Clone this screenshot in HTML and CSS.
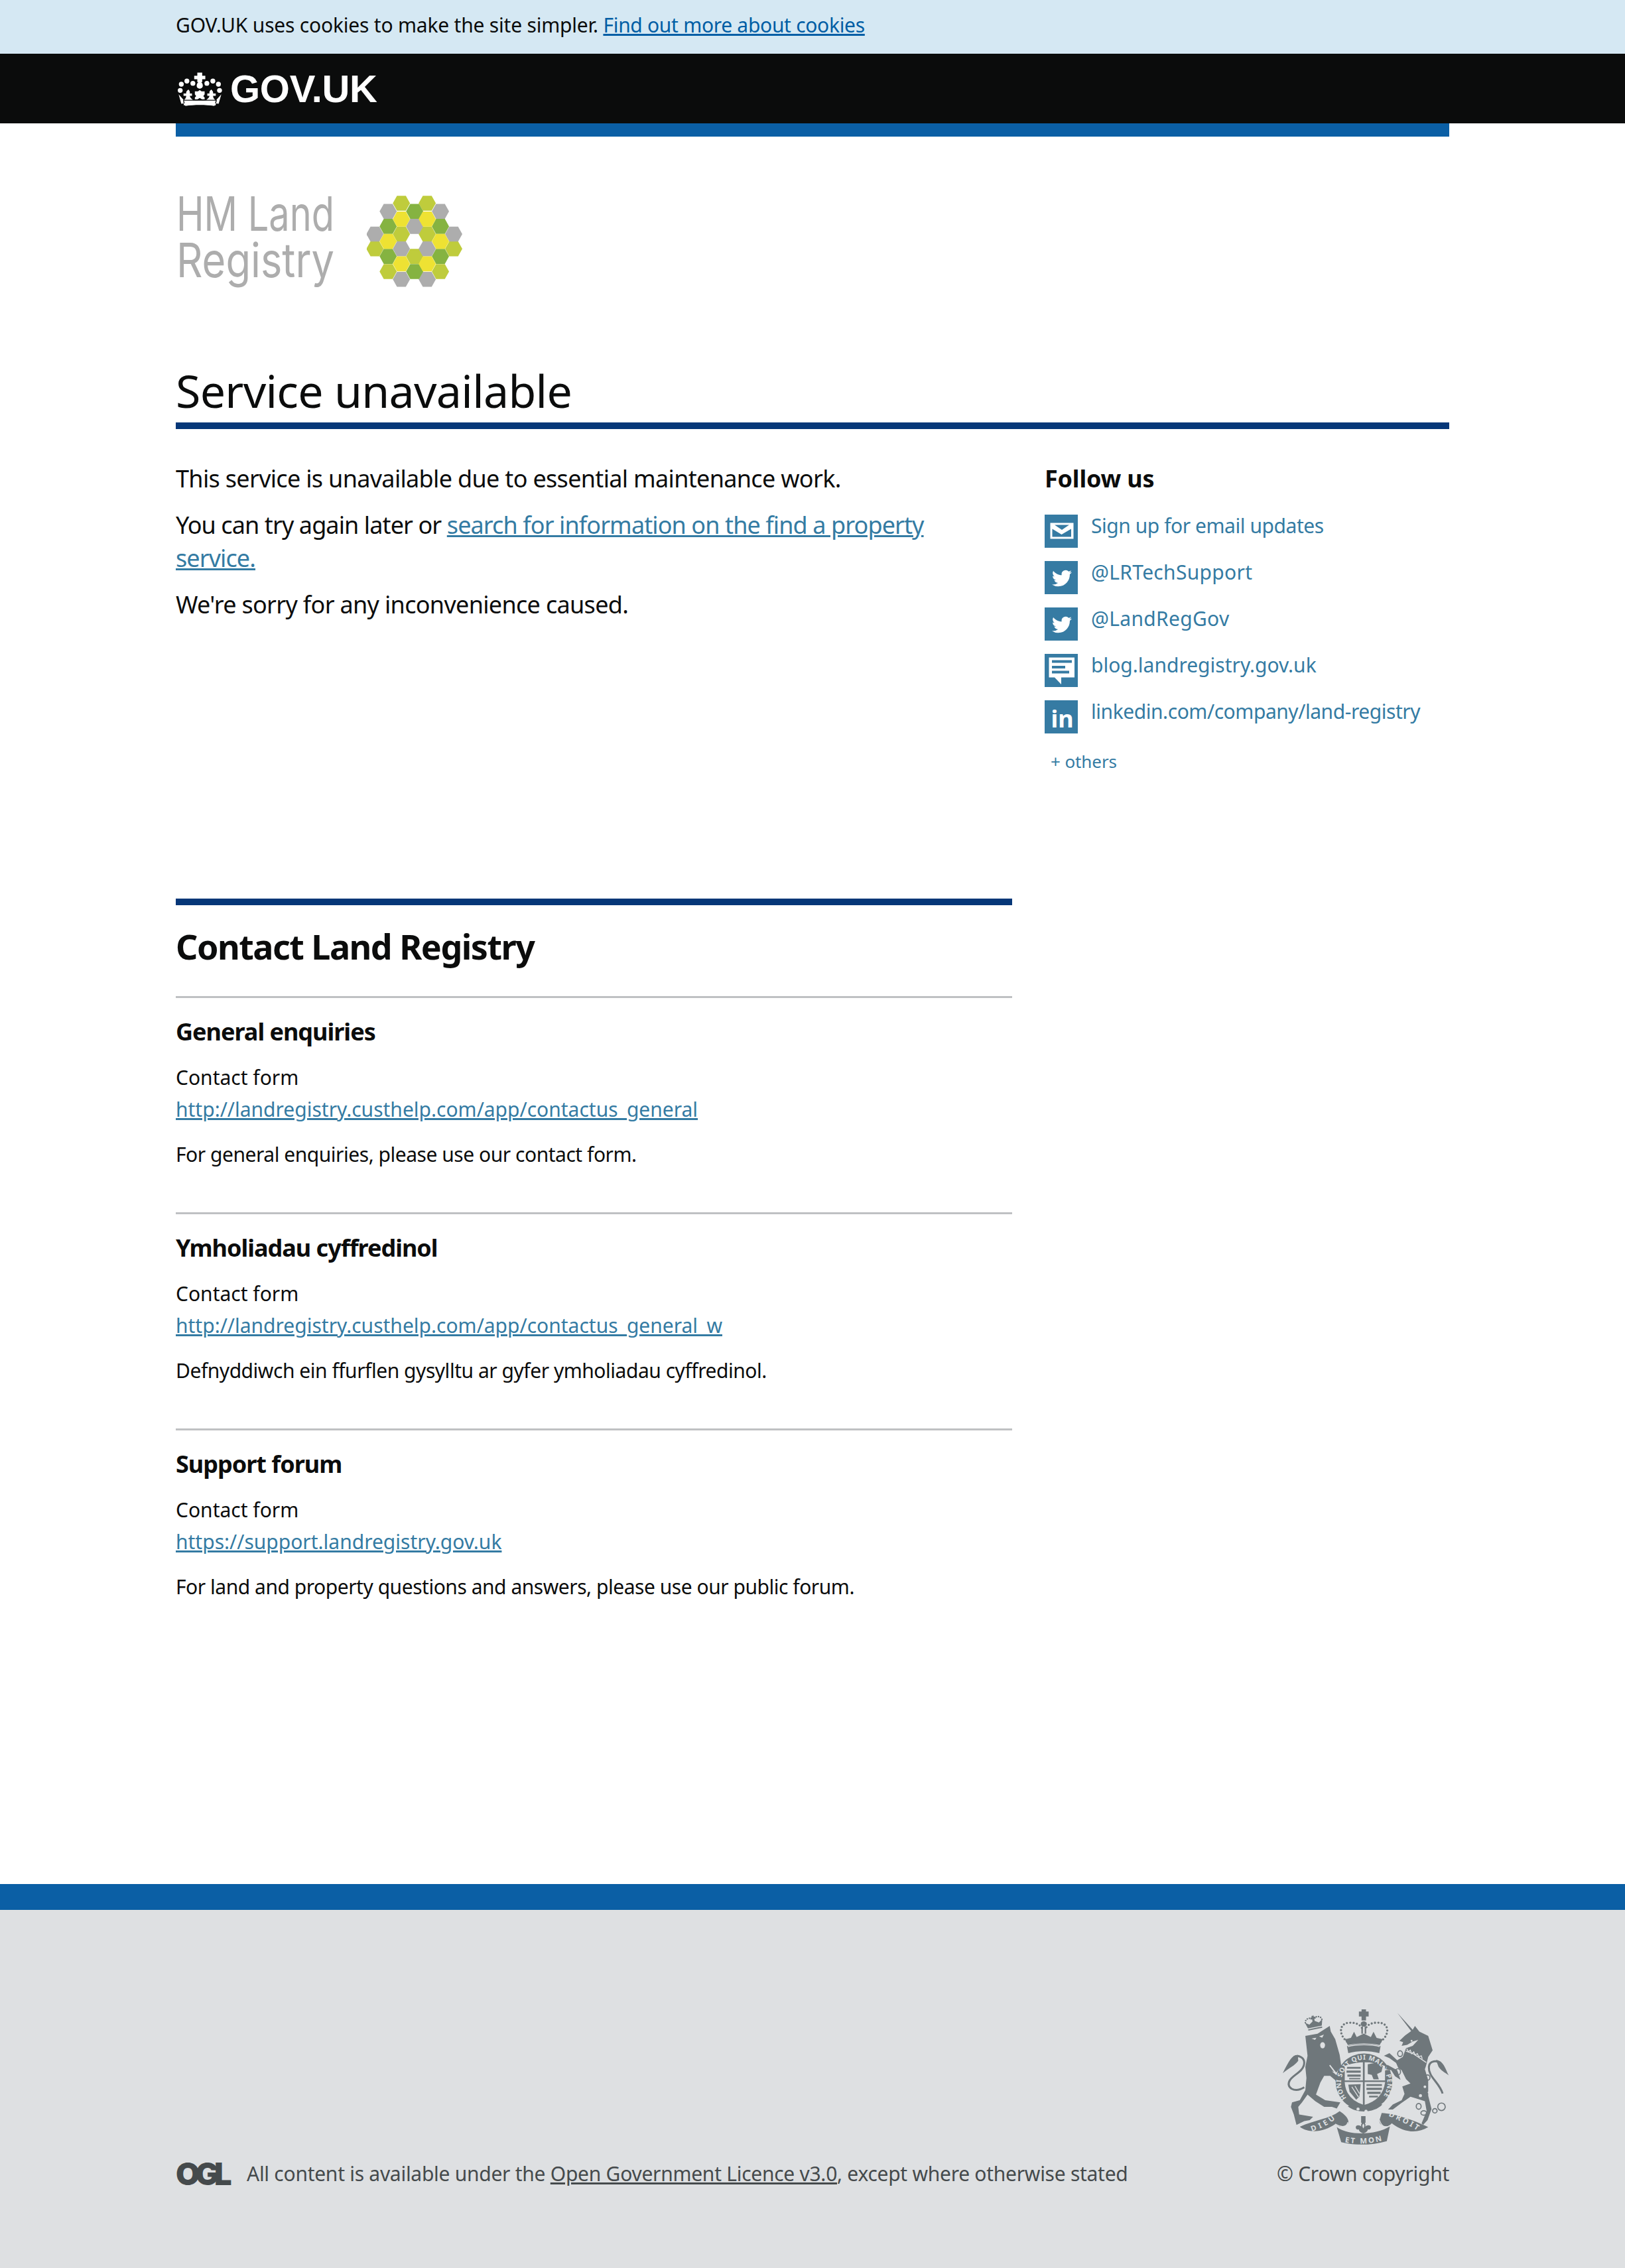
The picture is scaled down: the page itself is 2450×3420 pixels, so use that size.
FILE: index.html
```html
<!DOCTYPE html>
<html>
<head>
    <title>Service unavailable</title>
    <link rel="stylesheet" href="styles.css">
</head>
<body>
    <div class="cookie-bar">
        <p class="wrap">GOV.UK uses cookies to make the site simpler. <a href="#">Find out more about cookies</a></p>
    </div>

    <header class="site-header">
        <div class="wrap header-inner">
            <svg class="crown" viewBox="15 25 215 160" aria-hidden="true">
                <g fill="#fff">
                    <circle cx="35" cy="112" r="11"/><circle cx="40" cy="84" r="11"/><circle cx="65" cy="70" r="11"/><circle cx="92" cy="80" r="11"/>
                    <circle cx="155" cy="80" r="11"/><circle cx="182" cy="70" r="11"/><circle cx="207" cy="84" r="11"/><circle cx="212" cy="112" r="11"/>
                    <path d="M112 32h22v14h14v16h-14v12l-4 2c6 4 8 14 6 20-3 6-9 8-13 8s-11-2-13-8c-2-6 0-16 6-20l-4-2V62H98V46h14z"/>
                    <path d="M123 110l8 6h14v14l-6 8 6 6v8h-12l-10-6-10 6h-12v-8l6-6-6-8v-14h14z"/>
                    <path d="M72 108c6 6 8 12 6 18h10v10H78c2 8 6 12 14 18H52c6-4 10-10 10-18H50v-10h12c-2-6 2-12 10-18z"/>
                    <path d="M175 108c6 6 10 12 8 18h12v10h-12c0 8 4 14 10 18h-40c8-6 12-10 14-18h-10v-10h10c-2-6 0-12 8-18z"/>
                    <path d="M28 130l22 24-2 2 4 24c40-10 100-10 142 0l6-24-2-2 22-24-12 42c-50-10-118-10-168 0z"/>
                    <path d="M52 158h143l-6 24c-40-6-90-6-131 0z"/>
                </g>
            </svg>
            <span class="logo-text">GOV.UK</span>
        </div>
    </header>

    <main class="wrap">
        <div class="blue-bar"></div>

        <div class="org-logo">
            <svg class="org-name" viewBox="0 0 288 140" aria-hidden="true">
                <text x="1" y="53" textLength="238" lengthAdjust="spacingAndGlyphs">HM Land</text>
                <text x="1" y="123" textLength="238" lengthAdjust="spacingAndGlyphs">Registry</text>
            </svg>
            <svg class="org-hex" viewBox="938 106 433 414" aria-hidden="true">
                <defs>
                    <polygon id="hex" points="-39,0 -20,-34 20,-34 39,0 20,34 -20,34"/>
                </defs>
                <g fill="#bfcc3c">
                    <use href="#hex" x="1095" y="140"/><use href="#hex" x="1212" y="140"/>
                    <use href="#hex" x="1095" y="280"/><use href="#hex" x="1212" y="280"/>
                    <use href="#hex" x="975" y="347"/><use href="#hex" x="1332" y="347"/>
                    <use href="#hex" x="1155" y="381"/>
                    <use href="#hex" x="1035" y="450"/><use href="#hex" x="1272" y="450"/>
                </g>
                <g fill="#adadad">
                    <use href="#hex" x="1035" y="177"/><use href="#hex" x="1272" y="177"/>
                    <use href="#hex" x="1155" y="245"/>
                    <use href="#hex" x="975" y="280"/><use href="#hex" x="1332" y="280"/>
                    <use href="#hex" x="1095" y="347"/><use href="#hex" x="1212" y="347"/>
                    <use href="#hex" x="1095" y="485"/><use href="#hex" x="1212" y="485"/>
                </g>
                <g fill="#85b341">
                    <use href="#hex" x="1155" y="177"/>
                    <use href="#hex" x="1035" y="245"/><use href="#hex" x="1272" y="245"/>
                    <use href="#hex" x="1035" y="381"/><use href="#hex" x="1272" y="381"/>
                    <use href="#hex" x="1155" y="450"/>
                </g>
                <g fill="#eee233">
                    <use href="#hex" x="1095" y="212"/><use href="#hex" x="1212" y="212"/>
                    <use href="#hex" x="1035" y="313"/><use href="#hex" x="1272" y="313"/>
                    <use href="#hex" x="1095" y="415"/><use href="#hex" x="1212" y="415"/>
                </g>
            </svg>
        </div>

        <h1 class="page-title">Service unavailable</h1>

        <div class="columns">
            <div class="col-main">
                <div class="notice">
                    <p>This service is unavailable due to essential maintenance work.</p>
                    <p class="retry">You can try again later or <a href="#">search for information on the find a property<br>service.</a></p>
                    <p>We're sorry for any inconvenience caused.</p>
                </div>

                <section class="contact">
                    <h2>Contact Land Registry</h2>

                    <div class="contact-item">
                        <h3>General enquiries</h3>
                        <p class="contact-link">Contact form<br><a href="#">http://landregistry.custhelp.com/app/contactus_general</a></p>
                        <p>For general enquiries, please use our contact form.</p>
                    </div>

                    <div class="contact-item">
                        <h3>Ymholiadau cyffredinol</h3>
                        <p class="contact-link">Contact form<br><a href="#">http://landregistry.custhelp.com/app/contactus_general_w</a></p>
                        <p>Defnyddiwch ein ffurflen gysylltu ar gyfer ymholiadau cyffredinol.</p>
                    </div>

                    <div class="contact-item">
                        <h3>Support forum</h3>
                        <p class="contact-link">Contact form<br><a href="#">https://support.landregistry.gov.uk</a></p>
                        <p>For land and property questions and answers, please use our public forum.</p>
                    </div>
                </section>
            </div>

            <aside class="col-side">
                <h2>Follow us</h2>
                <ul class="follow-list">
                    <li>
                        <svg class="follow-icon" viewBox="0 0 50 50" aria-hidden="true">
                            <rect width="50" height="50" fill="#367ba3"/>
                            <rect x="8.500" y="12.500" width="35" height="24" fill="#fff"/>
                            <path d="M15 15.500h22L26 23zM11.500 21.500L25.500 30 40 21.500V33.500H11.500z" fill="#367ba3"/>
                        </svg>
                        <a class="tight" href="#">Sign up for email updates</a>
                    </li>
                    <li>
                        <svg class="follow-icon" viewBox="0 0 50 50" aria-hidden="true">
                            <rect width="50" height="50" fill="#367ba3"/>
                            <path transform="translate(11 11) scale(1.25)" fill="#fff" d="M23.953 4.57a10 10 0 01-2.825.775 4.958 4.958 0 002.163-2.723c-.951.555-2.005.959-3.127 1.184a4.92 4.92 0 00-8.384 4.482C7.69 8.095 4.067 6.13 1.64 3.162a4.822 4.822 0 00-.666 2.475c0 1.71.87 3.213 2.188 4.096a4.904 4.904 0 01-2.228-.616v.06a4.923 4.923 0 003.946 4.827 4.996 4.996 0 01-2.212.085 4.936 4.936 0 004.604 3.417 9.867 9.867 0 01-6.102 2.105c-.39 0-.779-.023-1.17-.067a13.995 13.995 0 007.557 2.209c9.053 0 13.998-7.496 13.998-13.985 0-.21 0-.42-.015-.63A9.935 9.935 0 0024 4.590z"/>
                        </svg>
                        <a class="wide" href="#">@LRTechSupport</a>
                    </li>
                    <li>
                        <svg class="follow-icon" viewBox="0 0 50 50" aria-hidden="true">
                            <rect width="50" height="50" fill="#367ba3"/>
                            <path transform="translate(11 11) scale(1.25)" fill="#fff" d="M23.953 4.57a10 10 0 01-2.825.775 4.958 4.958 0 002.163-2.723c-.951.555-2.005.959-3.127 1.184a4.92 4.92 0 00-8.384 4.482C7.69 8.095 4.067 6.13 1.64 3.162a4.822 4.822 0 00-.666 2.475c0 1.71.87 3.213 2.188 4.096a4.904 4.904 0 01-2.228-.616v.06a4.923 4.923 0 003.946 4.827 4.996 4.996 0 01-2.212.085 4.936 4.936 0 004.604 3.417 9.867 9.867 0 01-6.102 2.105c-.39 0-.779-.023-1.17-.067a13.995 13.995 0 007.557 2.209c9.053 0 13.998-7.496 13.998-13.985 0-.21 0-.42-.015-.63A9.935 9.935 0 0024 4.590z"/>
                        </svg>
                        <a class="wide" href="#">@LandRegGov</a>
                    </li>
                    <li>
                        <svg class="follow-icon" viewBox="0 0 50 50" aria-hidden="true">
                            <rect width="50" height="50" fill="#367ba3"/>
                            <path d="M6.500 5.500H45V35.500H25V46L15 35.500H6.500z" fill="#fff"/>
                            <rect x="11" y="9.500" width="30" height="4" fill="#367ba3"/>
                            <rect x="11" y="18" width="20" height="4" fill="#367ba3"/>
                            <rect x="11" y="25.500" width="26" height="4" fill="#367ba3"/>
                        </svg>
                        <a href="#">blog.landregistry.gov.uk</a>
                    </li>
                    <li>
                        <svg class="follow-icon" viewBox="0 0 50 50" aria-hidden="true">
                            <rect width="50" height="50" fill="#367ba3"/>
                            <text x="9.500" y="41" class="in-mark">in</text>
                        </svg>
                        <a class="tight" href="#">linkedin.com/company/land-registry</a>
                    </li>
                </ul>
                <a class="others" href="#">+ others</a>
            </aside>
        </div>
    </main>

    <footer class="site-footer">
        <div class="wrap footer-inner">
            <div class="licence">
                <span class="ogl">OGL</span>
                <span>All content is available under the <a href="#">Open Government Licence v3.0</a>, except where otherwise stated</span>
            </div>
            <div class="copyright">
                <svg class="arms" viewBox="105 90 755 620" aria-hidden="true">
                    <defs>
                        <path id="garter-arc" d="M396 490A105 105 0 1 1 556 490"/>
                        <path id="scroll-left" d="M240 642C280 628 320 610 352 578"/>
                        <path id="scroll-mid" d="M388 690C440 700 510 698 560 682"/>
                        <path id="scroll-right" d="M585 572C630 590 680 612 722 642"/>
                    </defs>
                    <!-- lion -->
                    <g fill="#6f777b">
                        <path transform="translate(60 60)" d="M150 150L205 140 260 105 265 130 285 165 305 235 312 285 290 315 270 310 300 335 322 375 305 388 285 350 262 330 235 330 218 360 198 415 240 440 308 450 292 478 270 470 235 470 195 445 160 415 135 450 118 470 122 505 185 515 170 530 145 535 110 552 98 505 85 470 90 450 125 440 150 395 155 340 150 290 160 240 155 195Z"/>
                        <path d="M176 296C150 294 135 325 108 378 140 352 160 346 178 322Z"/>
                        <g transform="rotate(-12 250 155)">
                            <path d="M218 170h64l8-28-18 12-22-14-22 14-18-12z"/>
                            <rect x="245" y="118" width="10" height="26"/><rect x="238" y="125" width="24" height="8"/>
                            <path d="M212 142c2-16 18-18 32-14M288 142c-2-16-18-18-32-14" fill="none" stroke="#6f777b" stroke-width="7" stroke-dasharray="0 10" stroke-linecap="round"/>
                            <rect x="218" y="174" width="64" height="6"/>
                        </g>
                    </g>
                    <path d="M205 442C160 470 120 442 140 410 155 385 205 370 205 330 205 305 175 295 160 305" fill="none" stroke="#6f777b" stroke-width="9"/>
                    <ellipse cx="288" cy="252" rx="11" ry="14" fill="#dee0e2"/>
                    <path d="M238 222l22-4-6 10zM272 212l22-8-8 14z" fill="#dee0e2"/>
                    <path d="M322 340l28 36-2 8-30-40z" fill="#dee0e2"/>

                    <!-- centre crown -->
                    <g fill="#6f777b">
                        <path d="M464 90h20v10h12v22h-12v18h-20v-18h-12v-22h12z"/>
                        <ellipse cx="474" cy="156" rx="14" ry="12"/>
                        <rect x="463" y="168" width="7" height="32"/><rect x="478" y="168" width="7" height="32"/>
                        <path d="M388 225l28-6 14-28 12 24 32-16 32 16 12-24 14 28 28 6-14 26c-44-10-100-10-144 0z"/>
                        <path d="M398 256c44-14 108-14 152 0l-6 32c-44-12-96-12-140 0z"/>
                    </g>
                    <path d="M402 258c40-11 106-11 144 0" fill="none" stroke="#dee0e2" stroke-width="4"/>
                    <path d="M398 235C360 205 360 150 412 150 440 150 458 158 468 178M550 235C592 205 592 150 538 150 510 150 490 158 482 178" fill="none" stroke="#6f777b" stroke-width="10" stroke-dasharray="0 15" stroke-linecap="round"/>

                    <!-- garter and shield -->
                    <circle cx="475" cy="417" r="128" fill="#6f777b"/>
                    <path d="M388 345Q475 312 570 345L570 420Q560 498 475 522 394 498 388 420Z" fill="#dee0e2"/>
                    <g fill="#6f777b">
                        <rect x="470" y="318" width="8" height="215"/>
                        <rect x="385" y="411" width="190" height="7"/>
                        <path d="M398 350h62v8h-62zM396 366h64v10h-64zM400 384h60v10h-60zM408 400h50v6h-50z"/>
                        <path d="M492 338l42-8 26 16-6 26-20 10 8 24h-24l-8-20-18-4z"/>
                        <path d="M404 430l56-2-6 56-14 14-30-36z"/>
                        <path d="M486 428h70v8h-70zM486 444h70v10h-70zM490 462h60v10h-60zM498 480h40v8h-40z"/>
                    </g>
                    <path d="M420 440l30 46M434 436l20 34" stroke="#dee0e2" stroke-width="4"/>
                    <text class="arms-garter"><textPath href="#garter-arc" textLength="465" lengthAdjust="spacing">HONI SOIT QUI MAL Y PENSE</textPath></text>
                    <path d="M402 528C440 560 520 560 558 520L520 510C500 530 460 530 440 510Z" fill="#6f777b"/>
                    <circle cx="448" cy="540" r="7" fill="#dee0e2"/><circle cx="484" cy="550" r="7" fill="#dee0e2"/>

                    <!-- unicorn -->
                    <g fill="#6f777b">
                        <path transform="translate(480 60)" d="M145 45L215 122 225 105 245 130 285 150 305 215 285 245 275 285 270 300 285 350 285 420 300 480 282 530 262 552 255 545 278 490 270 445 230 432 205 425 165 452 125 482 104 482 125 460 165 440 178 412 168 378 205 365 185 345 165 305 150 295 140 272 110 250 85 240 110 228 145 260 170 245 185 205 215 195 240 168 215 175 190 190 165 195 172 178 155 172 180 148 208 128Z"/>
                        <path transform="translate(480 60)" d="M100 280L145 305 160 348 135 332 118 305 95 300Z"/>
                        <path d="M800 318C835 320 845 365 858 388 835 372 825 368 812 350Z"/>
                    </g>
                    <path d="M830 470C815 420 765 395 768 350 770 322 805 315 826 340" fill="none" stroke="#6f777b" stroke-width="9"/>
                    <path d="M664 278L700 292 756 330" fill="none" stroke="#dee0e2" stroke-width="4"/>
                    <path d="M668 268l8 14 8-8 6 16 10-8 6 14 10-6 6 14 12-4 4 14" fill="none" stroke="#dee0e2" stroke-width="4"/>
                    <g fill="#dee0e2">
                        <circle cx="730" cy="480" r="7"/><circle cx="750" cy="440" r="6"/><circle cx="768" cy="465" r="5"/><circle cx="690" cy="232" r="4"/>
                    </g>
                    <g fill="none" stroke="#6f777b" stroke-width="5">
                        <ellipse cx="638" cy="290" rx="11" ry="13"/><ellipse cx="628" cy="372" rx="12" ry="14"/><ellipse cx="762" cy="398" rx="11" ry="12"/>
                        <ellipse cx="722" cy="528" rx="11" ry="13"/><ellipse cx="745" cy="558" rx="13" ry="10"/><circle cx="795" cy="548" r="10"/><circle cx="825" cy="530" r="17"/>
                    </g>

                    <!-- motto scroll -->
                    <g fill="#6f777b">
                        <path d="M185 620C250 590 320 585 365 550 390 565 412 590 402 606 385 626 360 622 345 608 300 640 230 655 185 620Z"/>
                        <path d="M352 622C400 660 530 660 592 618L578 685C510 705 430 705 372 690Z"/>
                        <path d="M555 558C610 560 700 590 765 622 720 650 660 650 602 606 575 632 540 612 545 590Z"/>
                        <path d="M462 572h20v28l-10 12-10-12z"/>
                        <path d="M472 596c10 8 12 18 8 24 8-8 22-10 26 0 2 10-8 16-14 12 0 8-8 14-20 18-12-4-20-10-20-18-6 4-16-2-14-12 4-10 18-8 26 0-4-6-2-16 8-24z"/>
                    </g>
                    <path d="M345 608C365 620 395 628 402 600M602 606C580 630 555 625 545 590" fill="none" stroke="#dee0e2" stroke-width="4"/>
                    <path d="M472 606c6 6 6 14 0 22-6-8-6-16 0-22z" fill="#dee0e2"/>
                    <text class="arms-motto"><textPath href="#scroll-left" textLength="120" lengthAdjust="spacing">DIEU</textPath></text>
                    <text class="arms-motto"><textPath href="#scroll-mid" textLength="170" lengthAdjust="spacing">ET MON</textPath></text>
                    <text class="arms-motto"><textPath href="#scroll-right" textLength="145" lengthAdjust="spacing">DROIT</textPath></text>
                </svg>
                <span class="crown-copy">© Crown copyright</span>
            </div>
        </div>
    </footer>
</body>
</html>
```

FILE: styles.css
```css
* {
    box-sizing: border-box;
}

body {
    font-family: 'Noto Sans', Arial, sans-serif;
    font-stretch: 87%;
    margin: 0;
    padding: 0;
    background-color: #ffffff;
    color: #0b0c0c;
}

p {
    margin: 0;
}

a {
    color: #347ba3;
}

.wrap {
    width: 1920px;
    margin: 0 auto;
}

.cookie-bar {
    height: 81px;
    background: #d5e8f3;
    font-size: 30px;
    line-height: 76px;
    letter-spacing: -0.2px;
}

.cookie-bar a {
    color: #005ea5;
    letter-spacing: -0.3px;
}

.site-header {
    height: 105px;
    background: #0b0c0c;
}

.header-inner {
    display: flex;
    align-items: center;
    height: 100%;
}

.crown {
    width: 72px;
    height: 54px;
    margin-right: 10px;
}

.logo-text {
    color: #ffffff;
    font-family: 'Liberation Sans', Arial, sans-serif;
    font-weight: bold;
    font-size: 58px;
    letter-spacing: -0.3px;
}

.blue-bar {
    height: 20px;
    background: #0b5fa5;
}

.org-logo {
    display: flex;
    align-items: flex-start;
    margin-top: 89px;
}

.org-name {
    width: 288px;
    height: 140px;
    overflow: visible;
    fill: #adadad;
    font-family: 'Inter', sans-serif;
    font-weight: 400;
    font-size: 72px;
}

.org-hex {
    width: 144px;
    height: 138px;
}

.page-title {
    margin: 0;
    margin-top: 111px;
    padding-bottom: 6px;
    border-bottom: 10px solid #063778;
    font-size: 68px;
    font-weight: 400;
    line-height: 85px;
    letter-spacing: -0.7px;
}

.columns {
    display: flex;
    justify-content: space-between;
}

.col-main {
    width: 1261px;
    padding-top: 50px;
    padding-bottom: 361px;
}

.col-side {
    width: 610px;
    padding-top: 50px;
}

.notice {
    font-size: 36px;
    line-height: 50px;
    letter-spacing: -0.68px;
}

.notice p {
    margin-bottom: 20px;
}

.notice .retry {
    letter-spacing: -0.9px;
}

.contact {
    margin-top: 418px;
    border-top: 10px solid #063778;
}

.contact h2 {
    margin: 0;
    font-size: 52px;
    font-weight: 700;
    line-height: 66px;
    letter-spacing: -1.5px;
    padding: 29px 0 42px;
}

.contact-item {
    height: 326px;
    border-top: 3px solid #bfc1c3;
    padding-top: 29px;
    font-size: 30px;
    line-height: 48px;
    letter-spacing: -0.47px;
}

.contact-item h3 {
    margin: 0 0 23px;
    font-size: 36px;
    font-weight: 700;
    line-height: 44px;
    letter-spacing: -1px;
}

.contact-link {
    margin-bottom: 20px;
    letter-spacing: 0;
}

.col-side h2 {
    margin: 0;
    font-size: 36px;
    font-weight: 700;
    line-height: 50px;
    letter-spacing: -0.2px;
}

.follow-list {
    list-style: none;
    margin: 29px 0 0;
    padding: 0;
}

.follow-list li {
    display: flex;
    align-items: flex-start;
    height: 70px;
    font-size: 30px;
    line-height: 36px;
}

.follow-list a {
    margin-top: -1px;
    text-decoration: none;
}

.follow-list a.tight {
    letter-spacing: -0.45px;
}

.follow-list a.wide {
    letter-spacing: 0.3px;
}

.follow-icon {
    width: 50px;
    height: 50px;
    margin-right: 20px;
    flex: none;
    overflow: visible;
}

.in-mark {
    font-family: 'Noto Sans', sans-serif;
    font-weight: 700;
    font-size: 36px;
    fill: #ffffff;
}

.others {
    display: block;
    margin: 4px 0 0 9px;
    font-size: 26px;
    letter-spacing: -0.1px;
    text-decoration: none;
}

.site-footer {
    height: 579px;
    background: #dee0e2;
    border-top: 39px solid #0b5fa5;
    color: #454a4c;
    font-size: 30px;
    letter-spacing: -0.27px;
}

.site-footer a {
    color: #454a4c;
}

.footer-inner {
    display: flex;
    justify-content: space-between;
    align-items: flex-end;
    height: 100%;
    padding-bottom: 122px;
}

.licence {
    display: flex;
    align-items: center;
}

.ogl {
    width: 107px;
    font-family: 'Inter', sans-serif;
    font-weight: 900;
    font-size: 47px;
    line-height: 40px;
    letter-spacing: -7px;
}

.copyright {
    display: flex;
    flex-direction: column;
    align-items: flex-end;
    gap: 20px;
}

.arms {
    width: 252px;
    height: 207px;
}

.arms-garter {
    font-family: 'Noto Sans', sans-serif;
    font-weight: 700;
    font-size: 30px;
    fill: #dee0e2;
}

.arms-motto {
    font-family: 'Noto Sans', sans-serif;
    font-weight: 700;
    font-size: 34px;
    fill: #dee0e2;
}
```
